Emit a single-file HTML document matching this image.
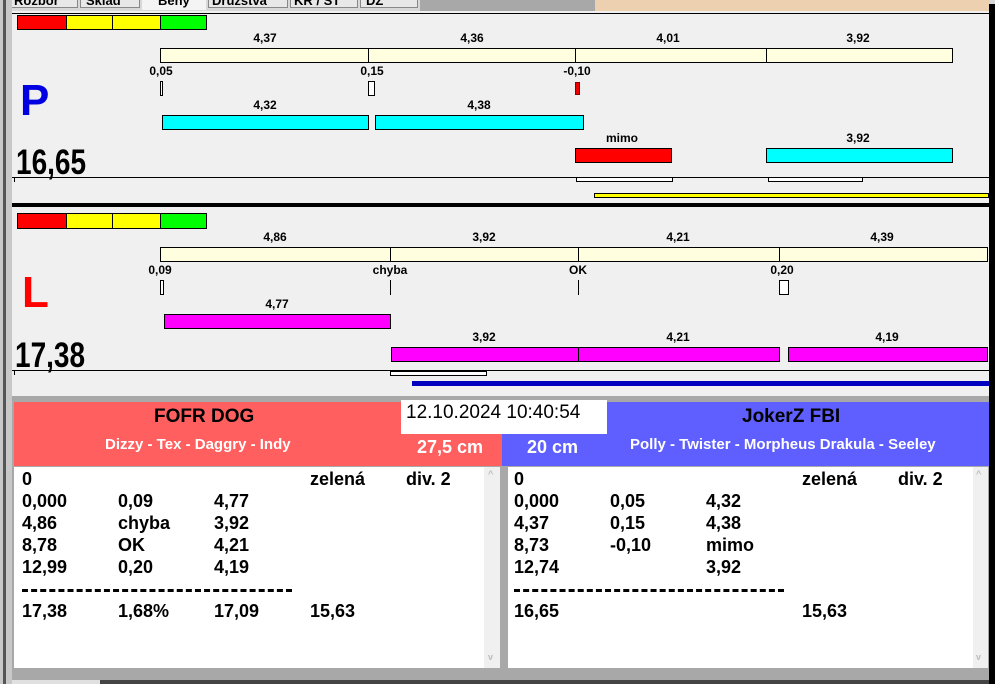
<!DOCTYPE html>
<html><head><meta charset="utf-8"><style>
*{margin:0;padding:0;box-sizing:border-box}
body{width:995px;height:684px;background:#f0f0f0;position:relative;overflow:hidden;font-family:"Liberation Sans",Arial,sans-serif;font-weight:bold}
div,span{position:absolute}
.l{font-size:12px;color:#000;transform:translateX(-50%);white-space:nowrap}
.bar{border:1px solid #000}
.t{font-size:18px;color:#000;white-space:nowrap}
.big{font-size:35px;color:#000;transform:scaleX(0.8);transform-origin:0 0;line-height:1}
.tab{top:-7px;font-size:13px;color:#000;white-space:nowrap}
</style></head><body>
<!-- top tabs strip -->
<div style="left:0;top:0;width:995px;height:11px;background:#d8d8d8"></div>
<div style="left:8px;top:0;width:70px;height:8px;background:#e8e8e8;border:1px solid #888;border-top:0"></div>
<div style="left:80px;top:0;width:60px;height:8px;background:#e8e8e8;border:1px solid #888;border-top:0"></div>
<div style="left:142px;top:0;width:64px;height:10px;background:#f4f4f4"></div>
<div style="left:208px;top:0;width:80px;height:8px;background:#e8e8e8;border:1px solid #888;border-top:0"></div>
<div style="left:290px;top:0;width:68px;height:8px;background:#e8e8e8;border:1px solid #888;border-top:0"></div>
<div style="left:360px;top:0;width:58px;height:8px;background:#e8e8e8;border:1px solid #888;border-top:0"></div>
<span class="tab" style="left:14px">Rozbor</span>
<span class="tab" style="left:86px">Sklad</span>
<span class="tab" style="left:158px">Běhy</span>
<span class="tab" style="left:212px">Družstva</span>
<span class="tab" style="left:294px">KR / ST</span>
<span class="tab" style="left:366px">DZ</span>
<div style="left:420px;top:0;width:175px;height:11px;background:#a8a8a8"></div>
<div style="left:595px;top:0;width:395px;height:11px;background:#ecd0b0"></div>
<!-- left frame -->
<div style="left:0;top:0;width:12px;height:684px;background:#c8c8c8"></div>
<div style="left:3px;top:0;width:3px;height:684px;background:#555"></div>
<!-- right black -->
<div style="left:989px;top:4px;width:6px;height:680px;background:#000"></div>

<!-- P panel -->
<div style="left:12px;top:13px;width:977px;height:192px;background:#f0f0f0;border-top:1px solid #000"></div>
<div style="left:17px;top:15px;width:50px;height:15px;background:#f00;border:1px solid #000"></div>
<div style="left:66px;top:15px;width:47px;height:15px;background:#ff0;border:1px solid #000"></div>
<div style="left:112px;top:15px;width:49px;height:15px;background:#ff0;border:1px solid #000"></div>
<div style="left:160px;top:15px;width:47px;height:15px;background:#0f0;border:1px solid #000"></div>
<span class="l" style="left:265px;top:31px">4,37</span>
<span class="l" style="left:472px;top:31px">4,36</span>
<span class="l" style="left:668px;top:31px">4,01</span>
<span class="l" style="left:858px;top:31px">3,92</span>
<div class="bar" style="left:160px;top:48px;width:793px;height:15px;background:#ffffe0"></div>
<div style="left:368px;top:48px;width:1px;height:15px;background:#000"></div>
<div style="left:575px;top:48px;width:1px;height:15px;background:#000"></div>
<div style="left:766px;top:48px;width:1px;height:15px;background:#000"></div>
<span class="l" style="left:161px;top:64px">0,05</span>
<span class="l" style="left:372px;top:64px">0,15</span>
<span class="l" style="left:577px;top:64px">-0,10</span>
<div class="bar" style="left:160px;top:81px;width:3px;height:15px;background:#fff"></div>
<div class="bar" style="left:368px;top:81px;width:7px;height:15px;background:#fff"></div>
<div style="left:575px;top:82px;width:5px;height:13px;background:#e00;border:1px solid #800"></div>
<span style="left:20px;top:76px;font-size:44px;color:#0000e0">P</span>
<span class="l" style="left:265px;top:98px">4,32</span>
<span class="l" style="left:479px;top:98px">4,38</span>
<div class="bar" style="left:162px;top:115px;width:207px;height:15px;background:#0ff"></div>
<div class="bar" style="left:375px;top:115px;width:209px;height:15px;background:#0ff"></div>
<span class="l" style="left:622px;top:131px">mimo</span>
<span class="l" style="left:858px;top:131px">3,92</span>
<div class="bar" style="left:575px;top:148px;width:97px;height:15px;background:#f00"></div>
<div class="bar" style="left:766px;top:148px;width:187px;height:15px;background:#0ff"></div>
<span class="big" style="left:16px;top:145px">16,65</span>
<div style="left:12px;top:177px;width:977px;height:1px;background:#000"></div>
<div style="left:14px;top:177px;width:1px;height:5px;background:#000"></div>
<div class="bar" style="left:576px;top:177px;width:97px;height:5px;background:#fff"></div>
<div class="bar" style="left:768px;top:177px;width:95px;height:5px;background:#fff"></div>
<div class="bar" style="left:594px;top:193px;width:395px;height:5px;background:#ff0"></div>
<div style="left:12px;top:203px;width:977px;height:4px;background:#000"></div>

<!-- L panel -->
<div style="left:17px;top:213px;width:50px;height:16px;background:#f00;border:1px solid #000"></div>
<div style="left:66px;top:213px;width:47px;height:16px;background:#ff0;border:1px solid #000"></div>
<div style="left:112px;top:213px;width:49px;height:16px;background:#ff0;border:1px solid #000"></div>
<div style="left:160px;top:213px;width:47px;height:16px;background:#0f0;border:1px solid #000"></div>
<span class="l" style="left:275px;top:230px">4,86</span>
<span class="l" style="left:484px;top:230px">3,92</span>
<span class="l" style="left:678px;top:230px">4,21</span>
<span class="l" style="left:882px;top:230px">4,39</span>
<div class="bar" style="left:160px;top:247px;width:828px;height:15px;background:#ffffe0"></div>
<div style="left:390px;top:247px;width:1px;height:15px;background:#000"></div>
<div style="left:578px;top:247px;width:1px;height:15px;background:#000"></div>
<div style="left:779px;top:247px;width:1px;height:15px;background:#000"></div>
<span class="l" style="left:160px;top:263px">0,09</span>
<span class="l" style="left:390px;top:263px">chyba</span>
<span class="l" style="left:578px;top:263px">OK</span>
<span class="l" style="left:782px;top:263px">0,20</span>
<div class="bar" style="left:160px;top:280px;width:4px;height:15px;background:#fff"></div>
<div style="left:390px;top:280px;width:1px;height:15px;background:#000"></div>
<div style="left:578px;top:280px;width:1px;height:15px;background:#000"></div>
<div class="bar" style="left:779px;top:280px;width:10px;height:15px;background:#fff"></div>
<span style="left:22px;top:268px;font-size:44px;color:#f00">L</span>
<span class="l" style="left:277px;top:297px">4,77</span>
<div class="bar" style="left:164px;top:314px;width:227px;height:15px;background:#f0f"></div>
<span class="l" style="left:484px;top:330px">3,92</span>
<span class="l" style="left:678px;top:330px">4,21</span>
<span class="l" style="left:887px;top:330px">4,19</span>
<div class="bar" style="left:391px;top:347px;width:389px;height:15px;background:#f0f"></div>
<div style="left:578px;top:347px;width:1px;height:15px;background:#000"></div>
<div class="bar" style="left:788px;top:347px;width:200px;height:15px;background:#f0f"></div>
<span class="big" style="left:15px;top:338px">17,38</span>
<div style="left:12px;top:370px;width:977px;height:1px;background:#000"></div>
<div style="left:14px;top:370px;width:1px;height:5px;background:#000"></div>
<div class="bar" style="left:390px;top:371px;width:97px;height:5px;background:#fff"></div>
<div style="left:412px;top:381px;width:577px;height:5px;background:#0000c0"></div>

<!-- bottom -->
<div style="left:12px;top:396px;width:977px;height:288px;background:#a8a8a8"></div>
<div style="left:14px;top:402px;width:488px;height:64px;background:#ff5f5f"></div>
<div style="left:502px;top:402px;width:487px;height:64px;background:#5f5fff"></div>
<div style="left:401px;top:400px;width:206px;height:34px;background:#fff"></div>
<span style="left:406px;top:402px;font-size:19px;font-weight:normal;color:#000">12.10.2024 10:40:54</span>
<span style="left:154px;top:406px;font-size:19px;color:#000">FOFR DOG</span>
<span style="left:742px;top:406px;font-size:19px;color:#000">JokerZ FBI</span>
<span style="left:105px;top:436px;font-size:15px;color:#fff">Dizzy - Tex - Daggry - Indy</span>
<span style="left:417px;top:437px;font-size:18px;color:#fff">27,5 cm</span>
<span style="left:527px;top:437px;font-size:18px;color:#fff">20 cm</span>
<span style="left:630px;top:436px;font-size:15px;color:#fff">Polly - Twister - Morpheus Drakula - Seeley</span>

<div style="left:14px;top:467px;width:486px;height:201px;background:#fff"></div>
<div style="left:484px;top:467px;width:16px;height:201px;background:#f0f0f0"></div>
<span style="left:488px;top:469px;font-size:9px;color:#bbb">^</span>
<span style="left:488px;top:652px;font-size:9px;color:#bbb">v</span>
<div style="left:508px;top:467px;width:480px;height:201px;background:#fff"></div>
<div style="left:973px;top:467px;width:15px;height:201px;background:#f0f0f0"></div>
<span style="left:976px;top:469px;font-size:9px;color:#bbb">^</span>
<span style="left:976px;top:652px;font-size:9px;color:#bbb">v</span>

<span class="t" style="left:22px;top:469px">0</span><span class="t" style="left:310px;top:469px">zelená</span><span class="t" style="left:406px;top:469px">div. 2</span>
<span class="t" style="left:22px;top:491px">0,000</span><span class="t" style="left:118px;top:491px">0,09</span><span class="t" style="left:214px;top:491px">4,77</span>
<span class="t" style="left:22px;top:513px">4,86</span><span class="t" style="left:118px;top:513px">chyba</span><span class="t" style="left:214px;top:513px">3,92</span>
<span class="t" style="left:22px;top:535px">8,78</span><span class="t" style="left:118px;top:535px">OK</span><span class="t" style="left:214px;top:535px">4,21</span>
<span class="t" style="left:22px;top:557px">12,99</span><span class="t" style="left:118px;top:557px">0,20</span><span class="t" style="left:214px;top:557px">4,19</span>
<div style="left:22px;top:589px;width:270px;height:0;border-top:3px dashed #000"></div>
<span class="t" style="left:22px;top:601px">17,38</span><span class="t" style="left:118px;top:601px">1,68%</span><span class="t" style="left:214px;top:601px">17,09</span><span class="t" style="left:310px;top:601px">15,63</span>

<span class="t" style="left:514px;top:469px">0</span><span class="t" style="left:802px;top:469px">zelená</span><span class="t" style="left:898px;top:469px">div. 2</span>
<span class="t" style="left:514px;top:491px">0,000</span><span class="t" style="left:610px;top:491px">0,05</span><span class="t" style="left:706px;top:491px">4,32</span>
<span class="t" style="left:514px;top:513px">4,37</span><span class="t" style="left:610px;top:513px">0,15</span><span class="t" style="left:706px;top:513px">4,38</span>
<span class="t" style="left:514px;top:535px">8,73</span><span class="t" style="left:610px;top:535px">-0,10</span><span class="t" style="left:706px;top:535px">mimo</span>
<span class="t" style="left:514px;top:557px">12,74</span><span class="t" style="left:706px;top:557px">3,92</span>
<div style="left:514px;top:589px;width:270px;height:0;border-top:3px dashed #000"></div>
<span class="t" style="left:514px;top:601px">16,65</span><span class="t" style="left:802px;top:601px">15,63</span>

<div style="left:12px;top:680px;width:977px;height:4px;background:#444"></div>
<div style="left:12px;top:680px;width:88px;height:4px;background:#e0e0e0"></div>
</body></html>
